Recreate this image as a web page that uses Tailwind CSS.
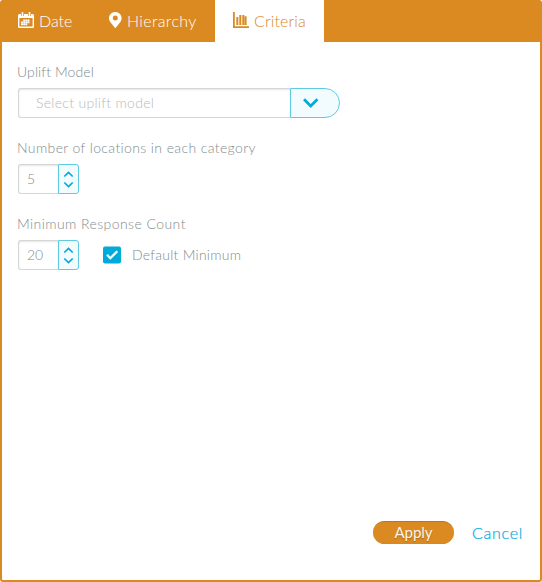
<!DOCTYPE html>
<html lang="en">
<head>
<meta charset="utf-8">
<title>Criteria</title>
<script src="https://cdn.jsdelivr.net/npm/@tailwindcss/browser@4"></script>
</head>
<body class="bg-white">
<main class="flex h-[582px] w-[542px] flex-col rounded-[3px] border-2 border-t-0 border-[#db8a22] bg-white font-['Lato','Open_Sans',sans-serif] text-[14px] font-light text-[#7f8c8d]">
  <nav class="flex h-[42px] shrink-0 bg-[#db8a22] text-[16px] leading-[41px] text-white">
    <a class="flex w-[91px] pl-4">
      <svg class="mt-[12px] mr-[5px] shrink-0" width="16" height="16" viewBox="0 0 16 16" fill="none">
        <rect x=".7" y="2.600" width="14.600" height="12.700" rx=".8" stroke="#fff" stroke-width="1.400"/>
        <path d="M1 2h14v4H1z" fill="#fff"/>
        <path d="M4.500 0v4M11.500 0v4" stroke="#db8a22" stroke-width="3"/>
        <path d="M4.500 0v4M11.500 0v4" stroke="#fff" stroke-width="1.600"/>
        <path d="M5.200 8.300h6.600M3 10.300h8.800M3 12.300h6.300" stroke="#fff" stroke-width="1.700" stroke-dasharray="1.900 .3"/>
      </svg>
      <span>Date</span>
    </a>
    <a class="flex w-[122px] pl-[15px]">
      <svg class="mt-[12px] mr-[5px] shrink-0" width="14" height="17" viewBox="0 0 14 17"><path d="M7.300 0C3.800 0 1 2.700 1 6.200c0 1.500.6 2.800 1.400 4L7.300 16.300l4.900-6.100c.8-1.200 1.400-2.500 1.400-4C13.600 2.700 10.800 0 7.300 0Zm0 3.500a2.500 2.500 0 1 1 0 5 2.500 2.500 0 0 1 0-5Z" fill="#fff" fill-rule="evenodd"/></svg>
      <span class="tracking-[0.35px]">Hierarchy</span>
    </a>
    <a class="flex w-[109px] bg-white pl-[18px] text-[#db8a22]">
      <svg class="mt-[12px] mr-[5px] shrink-0" width="16" height="17" viewBox="0 0 16 17" fill="none" stroke="#db8a22"><path d="M.9 0v15.200H16" stroke-width="1.800"/><path d="M4.300 5v8M7.300 3v10M10.300 3v10M12.600 4.200V13" stroke-width="2"/></svg>
      <span class="tracking-[0.15px]">Criteria</span>
    </a>
  </nav>

  <section class="flex grow flex-col px-[15px] pt-[20px]">
    <label class="h-[26px] leading-[20px] tracking-[0.1px]">Uplift Model</label>
    <div class="ml-px flex h-[30px] w-[322px]">
      <div class="w-[272px] rounded-l-[3px] border border-r-0 border-[#d5d7d7] pl-[17px] leading-[28px] tracking-[0.3px] text-[#b4baba] shadow-[inset_0_1px_2px_#0000001a]">Select uplift model</div>
      <div class="flex w-[50px] items-center rounded-r-full border border-[#5fcbe2] bg-[#f2fbfd] pl-[11px]">
        <svg width="18" height="10" viewBox="0 0 18 10" fill="none"><path d="m2 1.200 6.700 6.800 6.700-6.800" stroke="#00abda" stroke-width="2.700"/></svg>
      </div>
    </div>

    <label class="mt-[20px] h-[26px] leading-[20px] tracking-[0.38px]">Number of locations in each category</label>
    <div class="ml-px flex h-[30px] w-[61px]">
      <div class="w-10 rounded-l-[3px] border border-r-0 border-[#d5d7d7] pl-2 leading-[28px] shadow-[inset_0_1px_2px_#0000001a]">5</div>
      <div class="flex w-[21px] items-center justify-center rounded-r-[3px] border border-[#5fcbe2] bg-[#f2fbfd]">
        <svg width="11" height="18" viewBox="0 0 11 18" fill="none" stroke="#00abda" stroke-width="1.700"><path d="m1.300 6.500 4.200-4.100 4.200 4.100M1.300 12.500l4.200 4.100 4.200-4.100"/></svg>
      </div>
    </div>

    <label class="mt-[20px] h-[26px] leading-[20px] tracking-[0.43px]">Minimum Response Count</label>
    <div class="ml-px flex h-[30px] items-center">
      <div class="flex h-[30px] w-[61px]">
        <div class="w-10 rounded-l-[3px] border border-r-0 border-[#d5d7d7] pl-2 leading-[28px] shadow-[inset_0_1px_2px_#0000001a]">20</div>
        <div class="flex w-[21px] items-center justify-center rounded-r-[3px] border border-[#5fcbe2] bg-[#f2fbfd]">
          <svg width="11" height="18" viewBox="0 0 11 18" fill="none" stroke="#00abda" stroke-width="1.700"><path d="m1.300 6.500 4.200-4.100 4.200 4.100M1.300 12.500l4.200 4.100 4.200-4.100"/></svg>
        </div>
      </div>
      <svg class="ml-6" width="18" height="18" viewBox="0 0 18 18" fill="none"><rect width="18" height="17" y=".5" rx="2" fill="#00abda"/><path d="m4 8.700 3.300 3.500L14.300 5.300" stroke="#fff" stroke-width="2.300"/></svg>
      <span class="ml-[11px] pb-px tracking-[0.25px]">Default Minimum</span>
    </div>

    <footer class="mt-auto mb-[31px] flex h-[28px] items-start justify-end text-[16px]">
      <button class="h-[23px] w-[81px] rounded-full border-y border-t-[#b87821] border-b-[#c98a3d] bg-[#db8a22] pb-px text-[15px] leading-[20px] font-normal text-[#fff6ea] [text-shadow:0_1px_1px_#00000040]">Apply</button>
      <a class="mr-[2px] ml-[18px] w-[51px] leading-[24px] tracking-[0.75px] [-webkit-text-stroke:0.2px_#00abda] text-[#00abda]">Cancel</a>
    </footer>
  </section>
</main>
</body>
</html>
